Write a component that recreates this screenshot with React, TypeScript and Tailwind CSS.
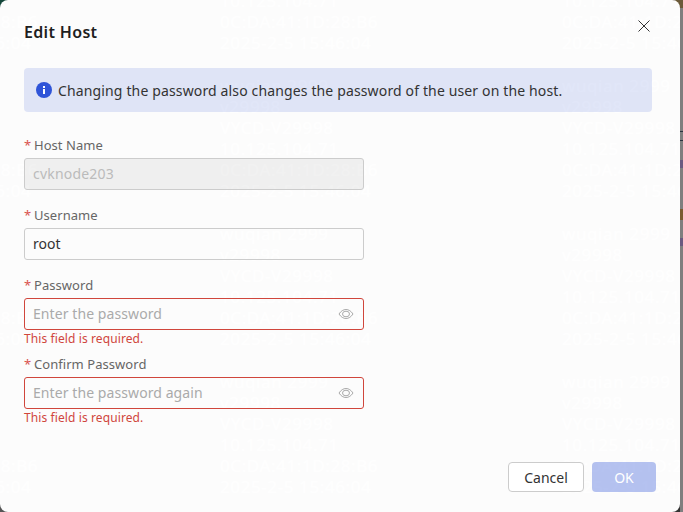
const GHOST_COLUMNS = ['left-[-120px]', 'left-[220px]', 'left-[562px]'];
const GHOST_ROWS = ['wuqian 2999', 'v29998', 'VYCD-V29998', '10.125.104.71', '0C:DA:41:1D:28:B6', '2025-2-5 15:46:04'];

function GhostText() {
  // table behind the translucent dialog
  return (
    <>
      {GHOST_COLUMNS.map((col) => (
        <div key={col} className={`absolute top-[-73px] ${col} flex flex-col gap-[22px] text-[17px] leading-[21px] tracking-[0.6px] whitespace-nowrap text-white/80`}>
          {[0, 1, 2, 3].map((group) => (
            <div key={group}>
              {GHOST_ROWS.map((row) => (
                <div key={row}>{row}</div>
              ))}
            </div>
          ))}
        </div>
      ))}
    </>
  );
}

function Label({ text }: { text: string }) {
  return (
    <div className="h-[20px] leading-[18px] text-[13px] tracking-[0.05px] text-[#666] mb-[2px]">
      <span className="text-[#d9534f] inline-block w-[10px]">*</span>
      {text}
    </div>
  );
}

function EyeIcon() {
  return (
    <svg width="16" height="16" viewBox="0 0 16 16" fill="none" stroke="#aaa" strokeWidth="1">
      <path d="M1 8c2-3 4.300-4.500 7-4.500S13 5 15 8c-2 3-4.300 4.500-7 4.500S3 11 1 8z" />
      <ellipse cx="8" cy="8" rx="3.500" ry="2.800" />
    </svg>
  );
}

function PasswordField({ label, placeholder }: { label: string; placeholder: string }) {
  return (
    <div>
      <Label text={label} />
      <div className="w-[340px] h-[32px] rounded-[3px] border border-[#d0463c] flex items-center pl-[8px] pr-[9px]">
        <span className="flex-1 pb-[2px] text-[14px] tracking-[0.08px] text-[#aaa]">{placeholder}</span>
        <EyeIcon />
      </div>
      <div className="h-[18px] leading-[16px] text-[12px] tracking-[0.1px] text-[#d0463c] mt-[1px]">This field is required.</div>
    </div>
  );
}

export default function App() {
  return (
    <div className="relative w-[683px] h-[512px] bg-[#7f7f7f] overflow-hidden" style={{ fontFamily: '"Noto Sans", sans-serif' }}>
      <div className="absolute top-0 left-0 w-[8px] h-[8px] bg-[#14463a]" />
      <div className="absolute top-0 left-[672px] w-[11px] h-[8px] bg-[#6b5a3a]" />
      <div className="absolute bottom-0 left-0 w-[8px] h-[8px] bg-[#555]" />
      <div className="absolute bottom-0 left-[672px] w-[8px] h-[8px] bg-[#333]" />
      <div className="absolute top-[131px] left-[680px] w-[3px] h-[10px] border-y border-[#2b3440]" />
      <div className="absolute top-[160px] left-[680px] w-[3px] h-[8px] bg-[#6a5a80]" />
      <div className="absolute top-[209px] left-[680px] w-[3px] h-[11px] bg-[#7a5a30]" />
      <div className="absolute top-[238px] left-[680px] w-[3px] h-[8px] bg-[#6a5a80]" />
      <div className="relative w-[680px] h-[512px] rounded-[8px] bg-[#fcfcfc] px-[24px] overflow-hidden">
        <GhostText />
        <svg width="16" height="16" viewBox="0 0 16 16" stroke="#333" strokeWidth="1" className="absolute top-[18px] right-[28px]">
          <path d="M2.500 2.500l11 11M13.500 2.500l-11 11" />
        </svg>
        <h1 className="relative pt-[20px] h-[68px] text-[16px] leading-[24px] tracking-[0.33px] font-semibold text-[#1f1f1f]">Edit Host</h1>
        <div className="relative w-[628px] h-[44px] rounded-[4px] bg-[#2f54d8]/14 flex items-center gap-[6px] px-[12px] text-[14px] tracking-[0.14px] text-[#333]">
          <svg width="16" height="16" viewBox="0 0 16 16">
            <circle cx="8" cy="8" r="8" fill="#2f54d8" />
            <rect x="7" y="7" width="2" height="5" fill="#fff" />
            <rect x="7" y="4" width="2" height="2" fill="#fff" />
          </svg>
          Changing the password also changes the password of the user on the host.
        </div>
        <div className="relative mt-[24px] flex flex-col">
          <Label text="Host Name" />
          <div className="w-[340px] h-[32px] rounded-[3px] border border-[#ccc] bg-black/5 flex items-center px-[8px] pb-[2px] text-[14px] tracking-[0.2px] text-[#bbb]">cvknode203</div>
          <div className="mt-[16px]">
            <Label text="Username" />
            <div className="w-[340px] h-[32px] rounded-[3px] border border-[#ccc] flex items-center px-[8px] pb-[2px] text-[14px] text-[#333]">root</div>
          </div>
          <div className="mt-[16px]">
            <PasswordField label="Password" placeholder="Enter the password" />
          </div>
          <div className="mt-[6px]">
            <PasswordField label="Confirm Password" placeholder="Enter the password again" />
          </div>
        </div>
        <div className="absolute right-[24px] bottom-[20px] flex gap-[8px]">
          <button className="w-[76px] h-[30px] rounded-[4px] border border-[#ccc] bg-white text-[14px] text-[#333]">Cancel</button>
          <button className="w-[64px] h-[30px] rounded-[4px] bg-[#2f54d8]/35 text-[14px] text-white">OK</button>
        </div>
      </div>
    </div>
  );
}
